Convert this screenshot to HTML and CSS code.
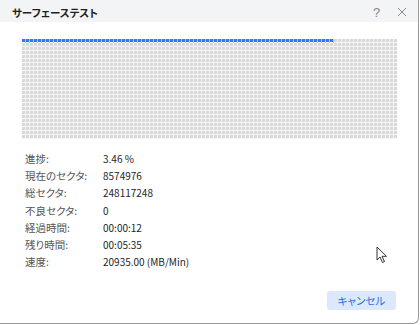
FILE: index.html
```html
<!DOCTYPE html>
<html lang="ja">
<head>
  <meta charset="UTF-8" />
  <title>サーフェーステスト</title>
  <link rel="stylesheet" href="styles.css">
</head>
<body>
  <div class="window">
    <div class="titlebar">
      <span class="title">サーフェーステスト</span>
      <span class="tb-btn">?</span>
      <span class="tb-btn close">
        <svg width="10" height="10" viewBox="0 0 10 10"><path d="M1 1 L9 9 M9 1 L1 9" stroke="#8a8a8a" stroke-width="1"/></svg>
      </span>
    </div>

    <div class="content">
      <div class="grid">
        <div class="done"></div>
      </div>

      <div class="info">
        <div class="row"><span class="label">進捗:</span><span class="value">3.46 %</span></div>
        <div class="row"><span class="label">現在のセクタ:</span><span class="value">8574976</span></div>
        <div class="row"><span class="label">総セクタ:</span><span class="value">248117248</span></div>
        <div class="row"><span class="label">不良セクタ:</span><span class="value">0</span></div>
        <div class="row"><span class="label">経過時間:</span><span class="value">00:00:12</span></div>
        <div class="row"><span class="label">残り時間:</span><span class="value">00:05:35</span></div>
        <div class="row"><span class="label">速度:</span><span class="value">20935.00 (MB/Min)</span></div>
      </div>

      <div class="footer">
        <button class="cancel">キャンセル</button>
      </div>
    </div>

    <svg class="cursor" width="12" height="18" viewBox="0 0 12 18">
      <path d="M1 1 L1 14 L4 11 L6.5 16.5 L8.5 15.6 L6 10.3 L10.5 10.3 Z" fill="#fff" stroke="#333" stroke-width="1" stroke-linejoin="round"/>
    </svg>
  </div>
</body>
</html>
```

FILE: styles.css
```css
* { box-sizing: border-box; }
html, body { margin: 0; padding: 0; background: #fff; }
body { font-family: "Noto Sans CJK JP", "Noto Sans", sans-serif; color: #222; font-feature-settings: "palt"; }

.window {
  position: relative;
  width: 419px; height: 324px;
  background: #fff;
  border-right: 1px solid #9a9a9a; border-bottom: 1px solid #9a9a9a;
  border-bottom-right-radius: 6px;
  display: flex; flex-direction: column;
}

.titlebar {
  height: 22px; background: #f3f4f6;
  display: flex; align-items: center;
  padding: 2px 0 0 12px;
}
.title { flex: 1; font-size: 10.5px; font-weight: 600; color: #1f1f1f; }
.tb-btn { width: 25px; display: flex; justify-content: center; font-size: 13px; color: #8a8a8a; font-family: "Liberation Sans", sans-serif; }
.tb-btn.close { margin-right: 4px; }

.content { flex: 1; padding: 17px 22px 13px 22px; display: flex; flex-direction: column; }

.grid {
  width: 375px; height: 100px;
  background-color: #d9d9d9;
  background-image:
    linear-gradient(to right, transparent 3px, #f4f4f4 3px),
    linear-gradient(to bottom, transparent 3px, #f4f4f4 3px);
  background-size: 4px 4px;
}
.done {
  width: 312px; height: 4px;
  background-color: #2b7cf4;
  background-image:
    linear-gradient(to right, transparent 3px, #a9cdfb 3px),
    linear-gradient(to bottom, transparent 3px, #fff 3px);
  background-size: 4px 4px;
}

.info { margin-top: 11px; padding-left: 3px; font-size: 10.5px; }
.row { display: flex; height: 17.2px; align-items: center; }
.label { width: 78px; color: #555; }
.value { color: #1e1e1e; font-size: 10px; }

.footer { margin-top: auto; display: flex; justify-content: flex-end; }
.cancel {
  width: 69px; height: 19px; padding: 0;
  font-family: inherit; font-size: 10.5px; color: #2d6fd8;
  font-feature-settings: "palt";
  background: #dce8fc; border: none; border-radius: 3px;
}

.cursor { position: absolute; left: 376px; top: 246px; }
```
